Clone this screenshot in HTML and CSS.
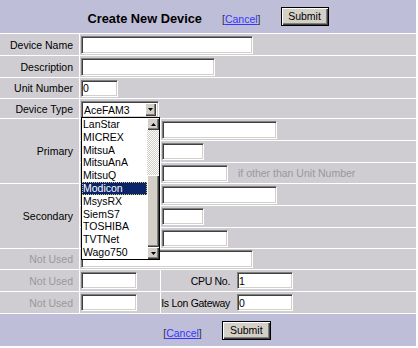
FILE: index.html
```html
<!DOCTYPE html>
<html>
<head>
<meta charset="utf-8">
<link rel="stylesheet" href="styles.css">
</head>
<body>
<div class="form">
  <div class="bar hdr">
    <span class="title">Create New Device</span>
    <span class="cancel">[<a href="#">Cancel</a>]</span>
    <button class="btn" type="button">Submit</button>
  </div>

  <div class="lbl">Device Name</div>
  <div class="fld span2"><input class="inp w-long" type="text"></div>

  <div class="lbl">Description</div>
  <div class="fld span2"><input class="inp w-desc" type="text"></div>

  <div class="lbl">Unit Number</div>
  <div class="fld span2"><input class="inp w-unit" type="text" value="0"></div>

  <div class="lbl">Device Type</div>
  <div class="fld span2">
    <div class="sel"><span class="sel-text">AceFAM3</span><span class="sel-btn"><svg width="5" height="3" viewBox="0 0 5 3"><path d="M0 0h5L2.5 3z"/></svg></span></div>
  </div>

  <div class="lbl span3">Primary</div>
  <div class="cell"></div>
  <div class="fld"><input class="inp w-p1" type="text"></div>
  <div class="cell"></div>
  <div class="fld"><input class="inp w-p2" type="text"></div>
  <div class="cell"></div>
  <div class="fld"><input class="inp w-p3" type="text"><span class="note">if other than Unit Number</span></div>

  <div class="lbl span3">Secondary</div>
  <div class="cell"></div>
  <div class="fld"><input class="inp w-p1" type="text"></div>
  <div class="cell"></div>
  <div class="fld"><input class="inp w-p2" type="text"></div>
  <div class="cell"></div>
  <div class="fld"><input class="inp w-p3" type="text"></div>

  <div class="lbl dim">Not Used</div>
  <div class="fld span2"><input class="inp w-long" type="text"></div>

  <div class="lbl dim">Not Used</div>
  <div class="fld"><input class="inp w-small" type="text"></div>
  <div class="fld"><span class="sub"><span>CPU No.</span></span><input class="inp w-small" type="text" value="1"></div>

  <div class="lbl dim">Not Used</div>
  <div class="fld"><input class="inp w-small" type="text"></div>
  <div class="fld"><span class="sub"><span>Is Lon Gateway</span></span><input class="inp w-small" type="text" value="0"></div>

  <div class="bar ftr">
    <span class="cancel">[<a href="#">Cancel</a>]</span>
    <button class="btn" type="button">Submit</button>
  </div>

  <div class="list">
    <div class="items">
      <div class="item">LanStar</div>
      <div class="item">MICREX</div>
      <div class="item">MitsuA</div>
      <div class="item">MitsuAnA</div>
      <div class="item">MitsuQ</div>
      <div class="item selected">Modicon</div>
      <div class="item">MsysRX</div>
      <div class="item">SiemS7</div>
      <div class="item">TOSHIBA</div>
      <div class="item">TVTNet</div>
      <div class="item">Wago750</div>
    </div>
    <div class="sb">
      <div class="sb-btn"><svg width="5" height="3" viewBox="0 0 5 3"><path d="M2.5 0L5 3H0z"/></svg></div>
      <div class="sb-track"></div>
      <div class="sb-thumb"></div>
      <div class="sb-btn"><svg width="5" height="3" viewBox="0 0 5 3"><path d="M0 0h5L2.5 3z"/></svg></div>
    </div>
  </div>
</div>
</body>
</html>
```
FILE: styles.css
```css
body {
  margin: 0;
  background: #fff;
  font-family: "Liberation Sans", Arial, sans-serif;
  font-size: 10.5px;
  color: #000;
}

.form {
  position: relative;
  width: 416px;
  display: grid;
  grid-template-columns: 79px 80px 255px;
  grid-template-rows: 33px 21px 21px 20px 19px 21px 21px 20px 21px 21px 20px 20px 21px 21px 32px;
  gap: 1px;
  background: #fff;
}

.form > div {
  background: #cfcdd1;
}

.form > .bar {
  grid-column: 1 / -1;
  background: #bebed8;
  display: flex;
  justify-content: center;
  align-items: center;
  gap: 20px;
}

.ftr {
  padding-left: 18px;
}

.title {
  font-size: 12.8px;
  font-weight: bold;
  margin-top: 3px;
}

.cancel {
  color: #333;
  font-size: 10.5px;
  margin-top: 5px;
}

.cancel a {
  color: #3535ff;
  text-decoration: underline;
}

.btn {
  box-sizing: border-box;
  width: 48px;
  height: 19px;
  padding: 0 0 1px;
  margin: 0;
  background: #d4d0c8;
  border: 1px solid #000;
  box-shadow: inset 1px 1px 0 #fff, inset -1px -1px 0 #404040, inset -2px -2px 0 #808080;
  font-family: "Liberation Sans", Arial, sans-serif;
  font-size: 10.5px;
  color: #000;
}

.ftr .btn {
  width: 49px;
}

.lbl {
  display: flex;
  align-items: center;
  justify-content: flex-end;
  padding-right: 6px;
  white-space: nowrap;
}

.dim {
  color: #999;
}

.span2 {
  grid-column: 2 / -1;
}

.span3 {
  grid-row: span 3;
}

.fld {
  display: flex;
  align-items: center;
  padding-left: 1px;
}

.inp {
  box-sizing: border-box;
  height: 17px;
  margin: 0;
  padding: 0 0 0 1px;
  background: #fff;
  border: 1px solid;
  border-color: #808080 #fff #fff #808080;
  box-shadow: inset 1px 1px 0 #404040, inset -1px -1px 0 #d4d0c8;
  font-family: "Liberation Sans", Arial, sans-serif;
  font-size: 10.5px;
  color: #000;
  outline: none;
}

.w-long { width: 172px; height: 18px; }
.w-desc { width: 134px; height: 18px; }
.w-unit { width: 37px; }
.w-p1 { width: 115px; height: 18px; }
.w-p2 { width: 42px; }
.w-p3 { width: 66px; }
.w-small { width: 56px; }

.note {
  margin-left: 10px;
  color: #999;
  white-space: nowrap;
}

.sub {
  box-sizing: border-box;
  flex: none;
  width: 75px;
  padding-right: 7px;
  display: flex;
  justify-content: flex-end;
  white-space: nowrap;
  letter-spacing: -0.3px;
}

/* closed select */
.sel {
  box-sizing: border-box;
  width: 78px;
  height: 17px;
  margin-top: 1px;
  display: flex;
  align-items: center;
  background: #fff;
  border: 1px solid;
  border-color: #808080 #fff #fff #808080;
  box-shadow: inset 1px 1px 0 #404040, inset -1px -1px 0 #d4d0c8;
  padding: 2px 2px 1px 2px;
}

.sel-text {
  flex: 1;
}

.sel-btn {
  box-sizing: border-box;
  width: 11px;
  height: 13px;
  display: flex;
  align-items: center;
  justify-content: center;
  background: #d4d0c8;
  box-shadow: inset 1px 1px 0 #fff, inset -1px -1px 0 #404040, inset -2px -2px 0 #808080;
}

/* open dropdown list */
.form > .list {
  position: absolute;
  left: 81px;
  top: 117px;
  box-sizing: border-box;
  width: 79px;
  height: 143px;
  border: 1px solid #000;
  background: #fff;
  display: flex;
}

.items {
  flex: 1;
}

.item {
  height: 12.8px;
  line-height: 12.8px;
  padding-left: 1px;
  white-space: nowrap;
}

.selected {
  background: #0a246a;
  color: #fff;
  outline: 1px dotted #d0c060;
  outline-offset: -1px;
}

.sb {
  width: 12px;
  display: flex;
  flex-direction: column;
}

.sb-btn {
  box-sizing: border-box;
  height: 12px;
  display: flex;
  align-items: center;
  justify-content: center;
  background: #d4d0c8;
  box-shadow: inset 1px 1px 0 #fff, inset -1px -1px 0 #404040, inset -2px -2px 0 #808080;
}

.sb-track {
  height: 45px;
  background: repeating-conic-gradient(#fff 0 25%, #d4d0c8 0 50%) 0 0 / 2px 2px;
}

.sb-thumb {
  flex: 1;
  background: #d4d0c8;
  box-shadow: inset 1px 1px 0 #fff, inset -1px -1px 0 #404040, inset -2px -2px 0 #808080;
}
```
